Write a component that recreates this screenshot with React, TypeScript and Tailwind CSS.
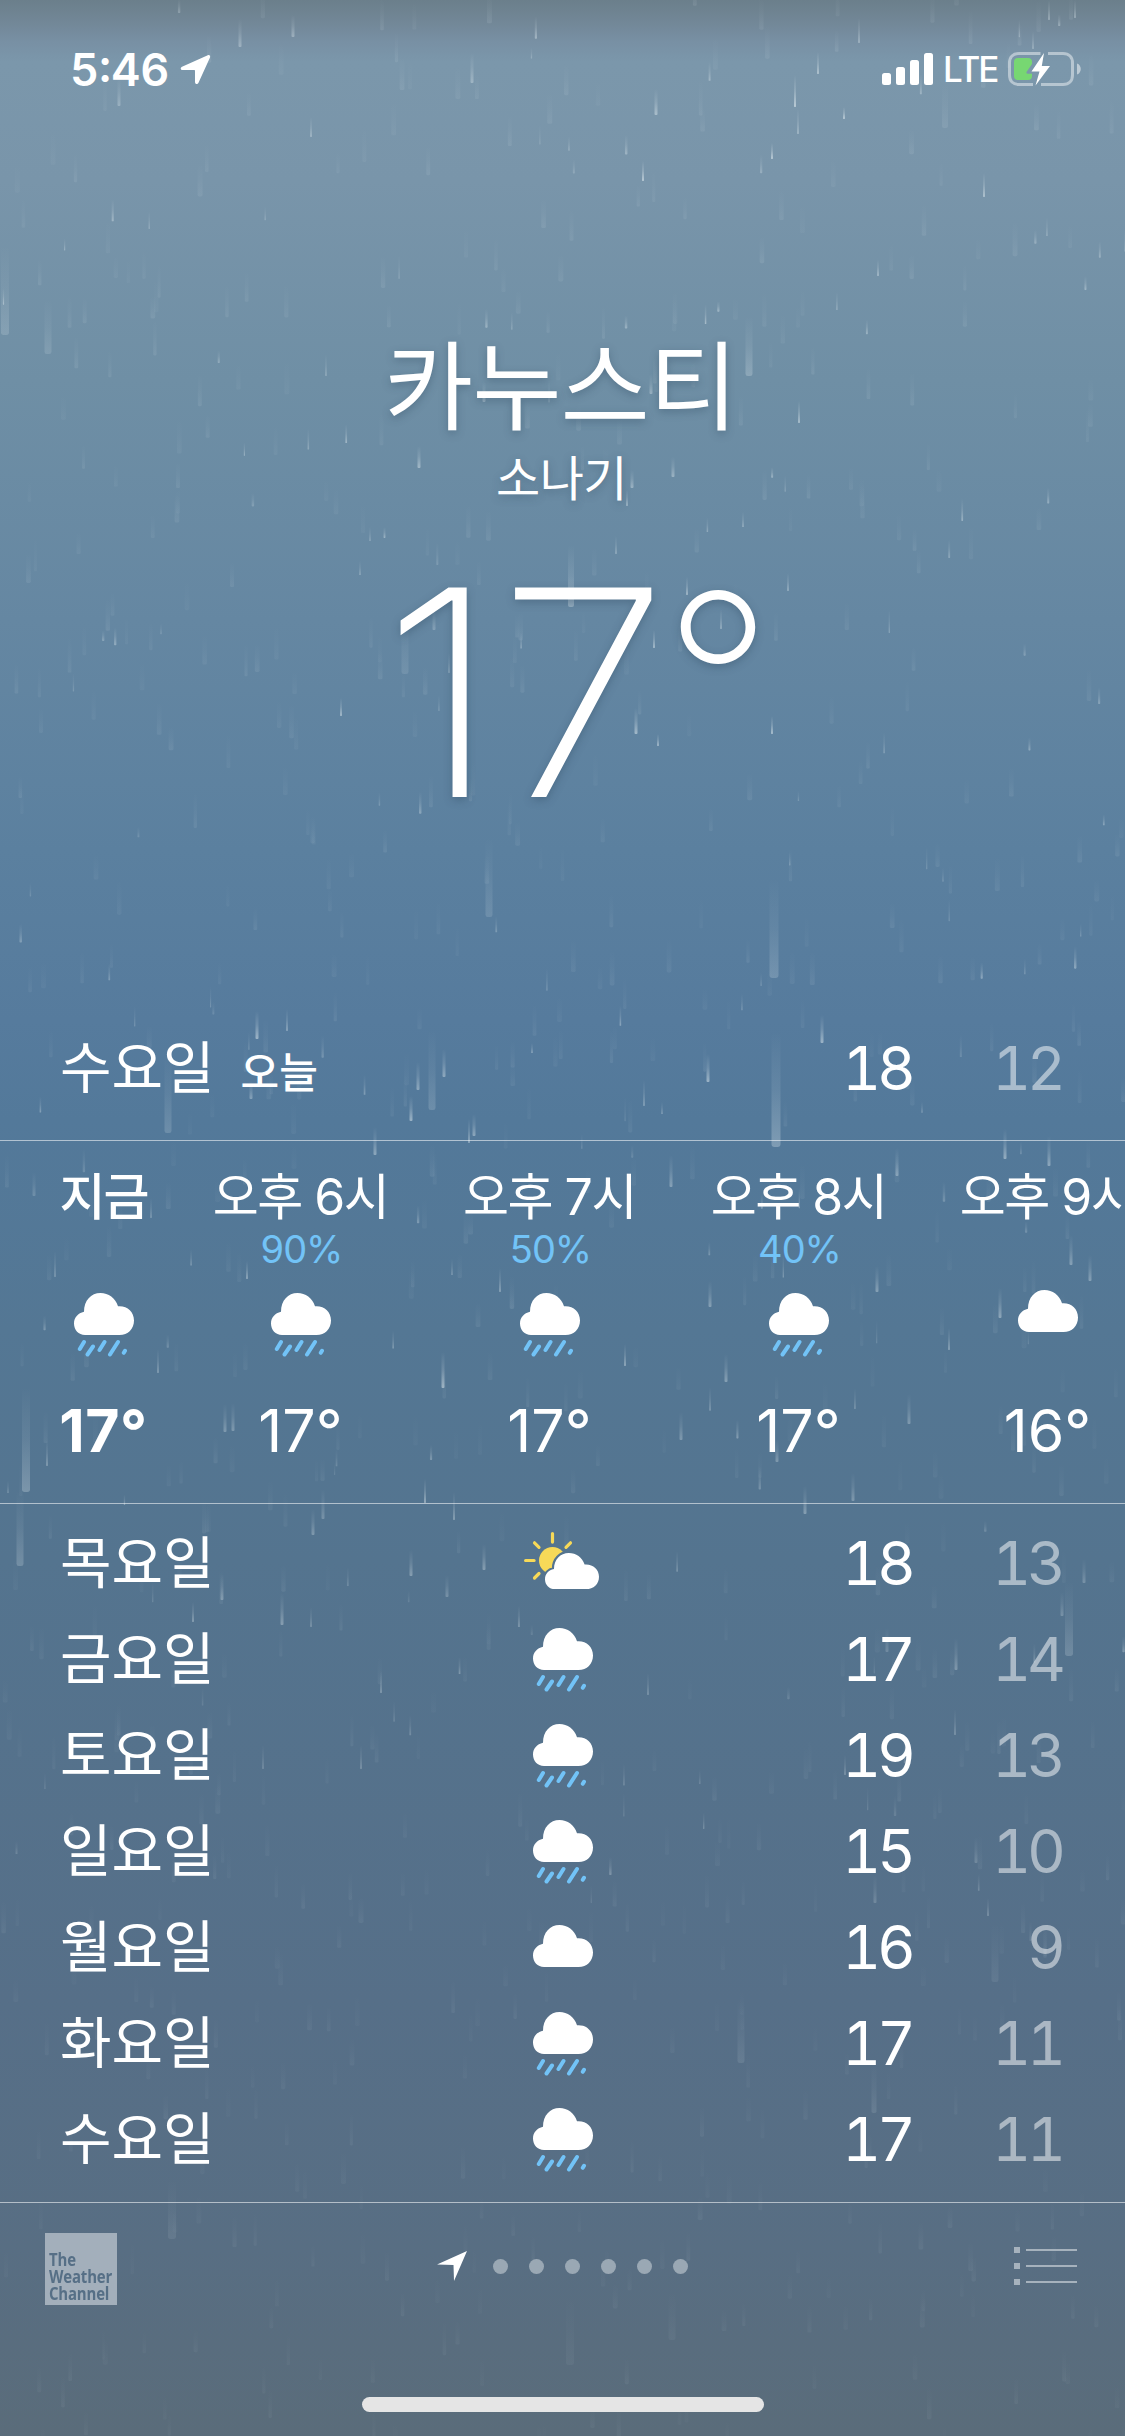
type Sky = 'rain' | 'cloud' | 'partly';

interface Hour {
  label: string;
  chance?: string;
  sky: Sky;
  temp: string;
  now?: boolean;
}

interface Day {
  name: string;
  sky: Sky;
  high: number;
  low: number;
}

const hours: Hour[] = [
  { label: '지금', sky: 'rain', temp: '17°', now: true },
  { label: '오후 6시', chance: '90%', sky: 'rain', temp: '17°' },
  { label: '오후 7시', chance: '50%', sky: 'rain', temp: '17°' },
  { label: '오후 8시', chance: '40%', sky: 'rain', temp: '17°' },
  { label: '오후 9시', sky: 'cloud', temp: '16°' },
];

const days: Day[] = [
  { name: '목요일', sky: 'partly', high: 18, low: 13 },
  { name: '금요일', sky: 'rain', high: 17, low: 14 },
  { name: '토요일', sky: 'rain', high: 19, low: 13 },
  { name: '일요일', sky: 'rain', high: 15, low: 10 },
  { name: '월요일', sky: 'cloud', high: 16, low: 9 },
  { name: '화요일', sky: 'rain', high: 17, low: 11 },
  { name: '수요일', sky: 'rain', high: 17, low: 11 },
];

// x, bottom, width, length, opacity
type Drop = [number, number, number, number, number];

// big soft drops close to the viewer
const nearDrops: Drop[] = [
  [776, 1147, 9, 115, 0.3], [774, 978, 9, 100, 0.2], [26, 1492, 8, 105, 0.27], [168, 1133, 7, 80, 0.18],
  [432, 1110, 7, 80, 0.18], [749, 376, 7, 60, 0.25], [571, 607, 6, 62, 0.35], [405, 674, 7, 60, 0.12],
  [489, 917, 7, 80, 0.15], [5, 335, 8, 90, 0.18], [48, 354, 7, 55, 0.15], [20, 1566, 7, 75, 0.22],
  [1069, 1656, 8, 75, 0.2], [741, 2063, 7, 65, 0.11], [172, 2239, 8, 60, 0.09], [570, 2365, 8, 70, 0.05],
  [672, 2340, 7, 50, 0.05], [874, 2113, 5, 50, 0.12], [995, 1982, 7, 60, 0.08], [945, 128, 6, 45, 0.1],
];

// thin bright drops
const farDrops: Drop[] = [
  [240, 47, 3, 28, 0.35], [293, 37, 3, 22, 0.35], [472, 83, 3, 30, 0.35], [656, 115, 3, 26, 0.45],
  [795, 107, 2, 32, 0.6], [798, 134, 2, 25, 0.35], [818, 74, 2, 22, 0.5], [643, 181, 2, 20, 0.6],
  [772, 159, 2, 16, 0.6], [844, 119, 2, 12, 0.6], [984, 197, 2, 24, 0.5], [311, 137, 2, 20, 0.35],
  [119, 106, 3, 28, 0.3], [859, 43, 2, 25, 0.35], [1049, 20, 2, 20, 0.35], [1033, 49, 2, 18, 0.3],
  [1075, 18, 2, 18, 0.35], [799, 423, 2, 22, 0.5], [651, 394, 3, 20, 0.35], [484, 402, 3, 20, 0.35],
  [419, 468, 3, 22, 0.45], [673, 477, 3, 20, 0.4], [632, 488, 3, 18, 0.4], [627, 506, 2, 16, 0.4],
  [743, 527, 1, 15, 0.6], [687, 595, 2, 18, 0.45], [721, 629, 2, 20, 0.35], [654, 648, 2, 18, 0.5],
  [636, 734, 3, 26, 0.5], [658, 746, 2, 12, 0.5], [772, 734, 2, 18, 0.55], [788, 591, 2, 18, 0.35],
  [449, 673, 2, 20, 0.25], [360, 575, 1, 14, 0.5], [370, 541, 1, 14, 0.45], [616, 554, 2, 18, 0.3],
  [341, 716, 2, 18, 0.5], [434, 630, 3, 22, 0.25], [257, 1039, 3, 28, 0.5], [287, 1031, 2, 22, 0.35],
  [418, 1090, 3, 28, 0.4], [444, 1077, 3, 28, 0.4], [411, 1121, 3, 25, 0.5], [532, 1053, 1, 10, 0.6],
  [469, 1143, 2, 24, 0.4], [474, 1136, 3, 22, 0.4], [375, 1155, 3, 28, 0.4], [251, 1099, 3, 18, 0.35],
  [452, 1275, 1, 16, 0.45], [500, 1292, 2, 24, 0.35], [443, 1388, 3, 36, 0.5], [425, 1503, 2, 24, 0.45],
  [158, 1373, 2, 24, 0.3], [225, 1432, 3, 28, 0.3], [233, 1431, 3, 28, 0.3], [47, 1466, 2, 26, 0.3],
  [247, 1279, 2, 18, 0.4], [55, 1277, 2, 26, 0.25], [151, 1218, 2, 20, 0.25], [34, 1196, 3, 24, 0.2],
  [822, 1043, 3, 28, 0.5], [708, 1082, 3, 28, 0.5], [644, 1106, 2, 26, 0.3], [662, 1114, 1, 12, 0.5],
  [671, 1187, 3, 32, 0.35], [897, 1176, 3, 28, 0.35], [1005, 1159, 3, 30, 0.45], [1049, 1166, 3, 30, 0.4],
  [1071, 1265, 3, 30, 0.35], [1090, 1281, 3, 26, 0.35], [1000, 1318, 3, 30, 0.4], [877, 1292, 3, 26, 0.35],
  [710, 1307, 3, 26, 0.35], [625, 1366, 2, 22, 0.4], [726, 1382, 3, 28, 0.35], [681, 1440, 3, 28, 0.3],
  [909, 1424, 3, 30, 0.3], [853, 1501, 3, 28, 0.3], [805, 1514, 3, 28, 0.35], [949, 1350, 2, 22, 0.35],
  [777, 1462, 3, 22, 0.3], [323, 1519, 3, 30, 0.25], [313, 1535, 3, 26, 0.3], [222, 1600, 3, 26, 0.3],
  [282, 1625, 3, 32, 0.35], [411, 1576, 3, 26, 0.35], [484, 1570, 3, 26, 0.35], [454, 1520, 2, 28, 0.35],
  [193, 1622, 2, 20, 0.35], [311, 1627, 2, 20, 0.25], [381, 1693, 2, 22, 0.3], [361, 1769, 2, 24, 0.25],
  [263, 1769, 2, 24, 0.2], [648, 1695, 2, 22, 0.25], [447, 1597, 3, 22, 0.25], [956, 1670, 3, 32, 0.3],
  [955, 1735, 2, 26, 0.25], [1084, 1583, 3, 24, 0.25], [1062, 1616, 3, 24, 0.25], [887, 1652, 3, 24, 0.2],
  [845, 1775, 2, 20, 0.25], [875, 1903, 3, 28, 0.2], [976, 1863, 3, 26, 0.2], [988, 1916, 2, 18, 0.25],
];

// fixed seed so every render gets the same shower
const scatter = (count: number): Drop[] => {
  let seed = 4711;
  const next = () => {
    seed = (seed * 16807) % 2147483647;
    return seed / 2147483647;
  };
  return Array.from({ length: count }, () => {
    const x = next() * 1125;
    const y = next() * 2460;
    const fade = 1 - (y / 2460) * 0.5;
    const thin = next() < 0.2 && y < 1950;
    return thin
      ? [x, y, 1 + next() * 1.5, 10 + next() * 14, (0.2 + next() * 0.3) * fade]
      : [x, y, 3 + next() * 2, 22 + next() * 14, (0.04 + next() * 0.07) * fade];
  });
};

const drops: Drop[] = [...scatter(900), ...farDrops, ...nearDrops];

const Rain = () => (
  <svg className="absolute inset-0 pointer-events-none" width="1125" height="2436" viewBox="0 0 1125 2436">
    <defs>
      <linearGradient id="drop" x1="0" y1="0" x2="0" y2="1">
        <stop offset="0" stopColor="#e4eef2" stopOpacity="0" />
        <stop offset="0.5" stopColor="#e4eef2" stopOpacity="0.35" />
        <stop offset="1" stopColor="#e4eef2" />
      </linearGradient>
    </defs>
    {drops.map(([x, y, w, len, o], i) => (
      <rect key={i} x={x - w / 2} y={y - len} width={w} height={len} rx={w / 3} fill="url(#drop)" opacity={o} />
    ))}
  </svg>
);

const CLOUD = 'M11 42C4.5 42 0 37 0 30.5C0 24.5 4 20 10 18.7C10 7.500 17 0 26.500 0C34.500 0 41.500 5 44 13.300C53 12.500 60 18.500 60 27.500C60 36 54 42 45.500 42Z';

const RainIcon = () => (
  <svg width="60" height="64" viewBox="0 0 60 64">
    <path d={CLOUD} fill="#fff" />
    <g stroke="#72c3f7" strokeWidth="4" strokeLinecap="round">
      <path d="M10 49l-4.200 7M19 53.500l-5.500 8M30.500 49l-5 8M44 49l-8 12.500M51 57.800l-1.200 2" />
    </g>
  </svg>
);

const CloudIcon = () => (
  <svg className="mb-[4px]" width="60" height="42" viewBox="0 0 60 42">
    <path d={CLOUD} fill="#fff" />
  </svg>
);

const PartlyIcon = () => (
  <svg className="mr-[3px] mb-[6px]" width="75" height="58" viewBox="0 0 75 58">
    <defs>
      <mask id="behind-cloud">
        <rect width="75" height="58" fill="#fff" />
        <g transform="translate(21 21) scale(.9 .86)">
          <path d={CLOUD} fill="#000" stroke="#000" strokeWidth="5" />
        </g>
      </mask>
    </defs>
    <circle cx="28.500" cy="28.500" r="13.500" fill="#f7d958" mask="url(#behind-cloud)" />
    <g stroke="#f7d958" strokeWidth="3.200" strokeLinecap="round">
      <path d="M28.500 1.600v8.500M10.500 10.800l4.500 4.500M46.500 10.800l-4.500 4.500M1.600 28.500h8.500M10.500 46l4.500-4.500" />
    </g>
    <g transform="translate(21 21) scale(.9 .86)">
      <path d={CLOUD} fill="#fff" />
    </g>
  </svg>
);

const SkyIcon = ({ sky }: { sky: Sky }) => {
  if (sky === 'partly') return <PartlyIcon />;
  return sky === 'rain' ? <RainIcon /> : <CloudIcon />;
};

const StatusBar = () => (
  <header className="flex h-[138px] shrink-0 items-center justify-between pl-[70px] pr-[43px]">
    <div className="flex items-center gap-[11px]">
      <span className="text-[45px] leading-none font-semibold tabular-nums">5:46</span>
      <svg width="31" height="31" viewBox="0 0 31 31" fill="#fff">
        <path d="M27.800 1.200L2 12.700C0 13.700 .5 16 2.700 16H14.300Q15 16 15 16.700V28C15 30.300 17.500 30.800 18.500 28.700L30 3.500C30.600 1.800 29.500 .5 27.800 1.200Z" />
      </svg>
    </div>
    <div className="flex items-center">
      <svg width="51" height="32" viewBox="0 0 51 32" fill="#fff">
        <rect x="0" y="20" width="9" height="12" rx="2.500" />
        <rect x="14" y="14" width="9" height="18" rx="2.500" />
        <rect x="28" y="7" width="9" height="25" rx="2.500" />
        <rect x="42" y="0" width="9" height="32" rx="2.500" />
      </svg>
      <span className="ml-[10px] w-[65px] text-[35px] leading-none font-medium tracking-[-2px]">LTE</span>
      <svg width="74" height="34" viewBox="0 0 74 34">
        <path d="M32.500 1.500H11C5 1.500 1.500 5 1.500 11V23C1.500 29 5 32.500 11 32.500H25M40 1.500H55C61 1.500 64.500 5 64.500 11V23C64.500 29 61 32.500 55 32.500H33" fill="none" stroke="#fff" strokeOpacity=".45" strokeWidth="3" />
        <path d="M69 11.500C74 13 74 21 69 22.500Z" fill="#fff" fillOpacity=".5" />
        <path d="M10 6H20Q24 6 24 10V12L18.500 20Q18 21.800 20 21.800H24V24Q24 28 20 28H10Q6 28 6 24V10Q6 6 10 6Z" fill="#77d772" />
        <path d="M36 1L23.500 19.500H31.500L27.500 33.500L42 14H33.800Z" fill="#fff" />
      </svg>
    </div>
  </header>
);

const Current = () => (
  <section className="flex h-[858px] shrink-0 flex-col items-center pt-[189px] [text-shadow:0_3px_8px_rgba(40,65,90,0.35)]">
    <h1 className="h-[120px] pr-[4px] text-[97px] leading-[120px] tracking-[-1px]">카누스티</h1>
    <p className="mt-[2px] h-[60px] pr-[2px] text-[48px] leading-[60px] tracking-[-0.5px]">소나기</p>
    <div className="mt-[33px] flex h-[300px] w-full pl-[381px] leading-[300px] font-extralight">
      <span className="w-[282px] origin-left scale-x-[1.08] text-[288px] tracking-[-2px]">17</span>
      <span className="-mt-[12px] text-[242px]">°</span>
    </div>
  </section>
);

const Temps = ({ high, low }: { high: number; low: number }) => (
  <div className="flex text-right text-[60px] leading-none tracking-[-4px] tabular-nums">
    <span className="w-[100px]">{high}</span>
    <span className="w-[150px] text-white/50">{low}</span>
  </div>
);

const Today = () => (
  <section className="flex h-[145px] shrink-0 items-center justify-between border-b border-white/55 pl-[60px] pr-[63px]">
    <div className="flex items-baseline gap-[26px]">
      <span className="text-[56px] leading-none">수요일</span>
      <span className="text-[42px] leading-none font-medium">오늘</span>
    </div>
    <Temps high={18} low={12} />
  </section>
);

const Hourly = () => (
  <section className="flex h-[363px] shrink-0 overflow-hidden border-b border-white/55">
    {hours.map((h) => (
      <div
        key={h.label}
        className={`flex shrink-0 flex-col items-center pt-[26px] ${h.now ? 'ml-[31px] w-[145px]' : 'w-[249px]'}`}
      >
        <span className={`h-[60px] text-[50px] leading-[60px] whitespace-nowrap ${h.now ? 'font-medium tracking-[-2px]' : 'tracking-[-1.5px]'}`}>
          {h.label}
        </span>
        <span className="h-[44px] pl-[2px] text-[38px] leading-[44px] tracking-[-1px] text-[#72c3f7]">{h.chance}</span>
        <div className={`h-[72px] ${h.sky === 'rain' ? 'mt-[22px]' : 'mt-[19px] mb-[3px]'}`}>
          <SkyIcon sky={h.sky} />
        </div>
        <span className={`mt-[36px] h-[60px] text-[59px] leading-[60px] ${h.now ? 'font-bold tracking-[0.5px]' : ''}`}>{h.temp}</span>
      </div>
    ))}
  </section>
);

const Daily = () => (
  <section className="flex h-[699px] shrink-0 flex-col border-b border-white/55 pt-[11px]">
    {days.map((d, i) => (
      <div key={i} className="flex h-[96px] items-center pl-[60px] pr-[63px]">
        <span className="w-[403px] text-[56px] leading-none">{d.name}</span>
        <div className="flex w-[200px] justify-center pt-[2px]">
          <SkyIcon sky={d.sky} />
        </div>
        <div className="ml-auto">
          <Temps high={d.high} low={d.low} />
        </div>
      </div>
    ))}
  </section>
);

const Footer = () => (
  <footer className="flex grow flex-col">
    <div className="grid grid-cols-[1fr_auto_1fr] items-center pt-[30px] pl-[45px] pr-[48px]">
      <div className="size-[72px] bg-[#a3afbb] pt-[18px] pl-[4px]">
        <div className="flex origin-left scale-x-[0.88] flex-col font-['Open_Sans'] text-[17px] leading-[17px] font-bold tracking-[-0.2px] text-[#566f86]">
          <span>The</span>
          <span>Weather</span>
          <span>Channel</span>
        </div>
      </div>
      <div className="mb-[6px] flex items-center gap-[21px] pl-[2px]">
        <svg className="mr-[5px]" width="30" height="30" viewBox="0 0 30 30">
          <path d="M0 13.500L30 0L17 30L16.500 14Z" fill="#fff" />
        </svg>
        {[0, 1, 2, 3, 4, 5].map((n) => (
          <i key={n} className="size-[15px] rounded-full bg-[#9aa8b4]" />
        ))}
      </div>
      <svg className="mb-[6px] justify-self-end" width="63" height="38" viewBox="0 0 63 38" fill="#a6b2bd">
        {[0, 16, 32].map((y) => (
          <g key={y}>
            <rect x="0" y={y} width="6" height="6" />
            <rect x="12" y={y + 2} width="51" height="2" />
          </g>
        ))}
      </svg>
    </div>
    <div className="mx-auto mt-auto mb-[24px] h-[15px] w-[402px] rounded-full bg-[#e5e5e5]" />
  </footer>
);

export default function App() {
  return (
    <div className="relative h-[2436px] w-[1125px] overflow-hidden bg-[linear-gradient(to_bottom,#6b7f8b_0px,#728797_22px,#7890a4_42px,#7b97ab_62px,#7995aa_180px,#6f8fa5_380px,#6587a2_620px,#5b809f_850px,#567b9d_1020px,#53799a_1120px,#547794_1330px,#54748f_1560px,#566f88_2000px,#586e83_2250px,#5a6c7a_2436px)]">
      <Rain />
      <div className="relative flex h-full flex-col font-['Inter','Noto_Sans_CJK_KR',sans-serif] text-white">
        <StatusBar />
        <Current />
        <Today />
        <Hourly />
        <Daily />
        <Footer />
      </div>
    </div>
  );
}
